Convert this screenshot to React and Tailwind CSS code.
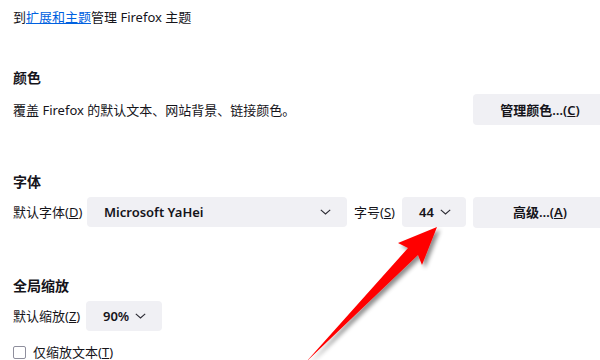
import React from 'react';

const Chevron = () => (
    <svg width="11" height="6" viewBox="0 0 11 6" fill="none" className="shrink-0">
        <path d="M0.8 0.8 L5.5 5 L10.2 0.8" stroke="#2b2a33" strokeWidth="1.1" />
    </svg>
);

const SelectBox = ({ label, className = '', between = false }) => (
    <div
        className={`h-[30px] rounded-[4px] bg-[#f0f0f4] flex items-center pl-[17px] pr-[16px] font-semibold text-[13px] text-[#15141a] ${between ? 'justify-between' : 'gap-[6px]'} ${className}`}
    >
        <span>{label}</span>
        <Chevron />
    </div>
);

const Button = ({ children, className = '' }) => (
    <div className={`h-[31px] w-[134px] rounded-[4px] bg-[#f0f0f4] flex items-center justify-center font-semibold text-[13px] text-[#15141a] shrink-0 ${className}`}>
        {children}
    </div>
);

const App = () => {
    return (
        <div
            className="relative w-[600px] h-[360px] overflow-hidden bg-white text-[#15141a] text-[13px] leading-[20px]"
            style={{ fontFamily: '"Noto Sans", "Noto Sans CJK SC", sans-serif' }}
        >
            <div className="w-[620px] px-[13px]">
                {/* 主题 */}
                <div className="h-[34px] flex items-center">
                    <span>到</span>
                    <span className="text-[#0061e0] underline">扩展和主题</span>
                    <span>管理 Firefox 主题</span>
                </div>

                {/* 颜色 */}
                <div className="mt-[34px] h-[20px] font-bold text-[14px]">颜色</div>
                <div className="mt-[6px] flex items-center justify-between h-[31px]">
                    <span>覆盖 Firefox 的默认文本、网站背景、链接颜色。</span>
                    <Button>管理颜色…(<span className="underline">C</span>)</Button>
                </div>

                {/* 字体 */}
                <div className="mt-[47px] h-[20px] font-bold text-[14px]">字体</div>
                <div className="mt-[5px] flex items-center h-[30px]">
                    <span className="w-[74px] shrink-0">默认字体(<span className="underline">D</span>)</span>
                    <SelectBox label="Microsoft YaHei" between className="w-[260px]" />
                    <span className="ml-[7px] w-[48px] shrink-0">字号(<span className="underline">S</span>)</span>
                    <SelectBox label="44" className="w-[64px]" />
                    <Button className="ml-[7px]">高级…(<span className="underline">A</span>)</Button>
                </div>

                {/* 全局缩放 */}
                <div className="mt-[49px] h-[20px] font-bold text-[14px]">全局缩放</div>
                <div className="mt-[5px] flex items-center h-[30px]">
                    <span className="w-[73px] shrink-0">默认缩放(<span className="underline">Z</span>)</span>
                    <SelectBox label="90%" className="w-[76px]" />
                </div>
                <div className="mt-[14px] flex items-center h-[14px] gap-[7px]">
                    <div className="w-[13px] h-[13px] rounded-[2px] border border-[#8f8f9d] bg-white shrink-0"></div>
                    <span>仅缩放文本(<span className="underline">T</span>)</span>
                </div>
            </div>

            {/* 红色箭头标注 */}
            <svg className="absolute left-0 top-0 pointer-events-none" width="600" height="360" viewBox="0 0 600 360">
                <defs>
                    <filter id="arrowShadow" x="-20%" y="-20%" width="140%" height="140%">
                        <feDropShadow dx="3" dy="3" stdDeviation="2" floodColor="#000" floodOpacity="0.45" />
                    </filter>
                </defs>
                <polygon
                    points="437,227 422,265 418,255 306,362 408,248 398,243"
                    fill="#ff0000"
                    filter="url(#arrowShadow)"
                />
            </svg>
        </div>
    );
};

export default App;
